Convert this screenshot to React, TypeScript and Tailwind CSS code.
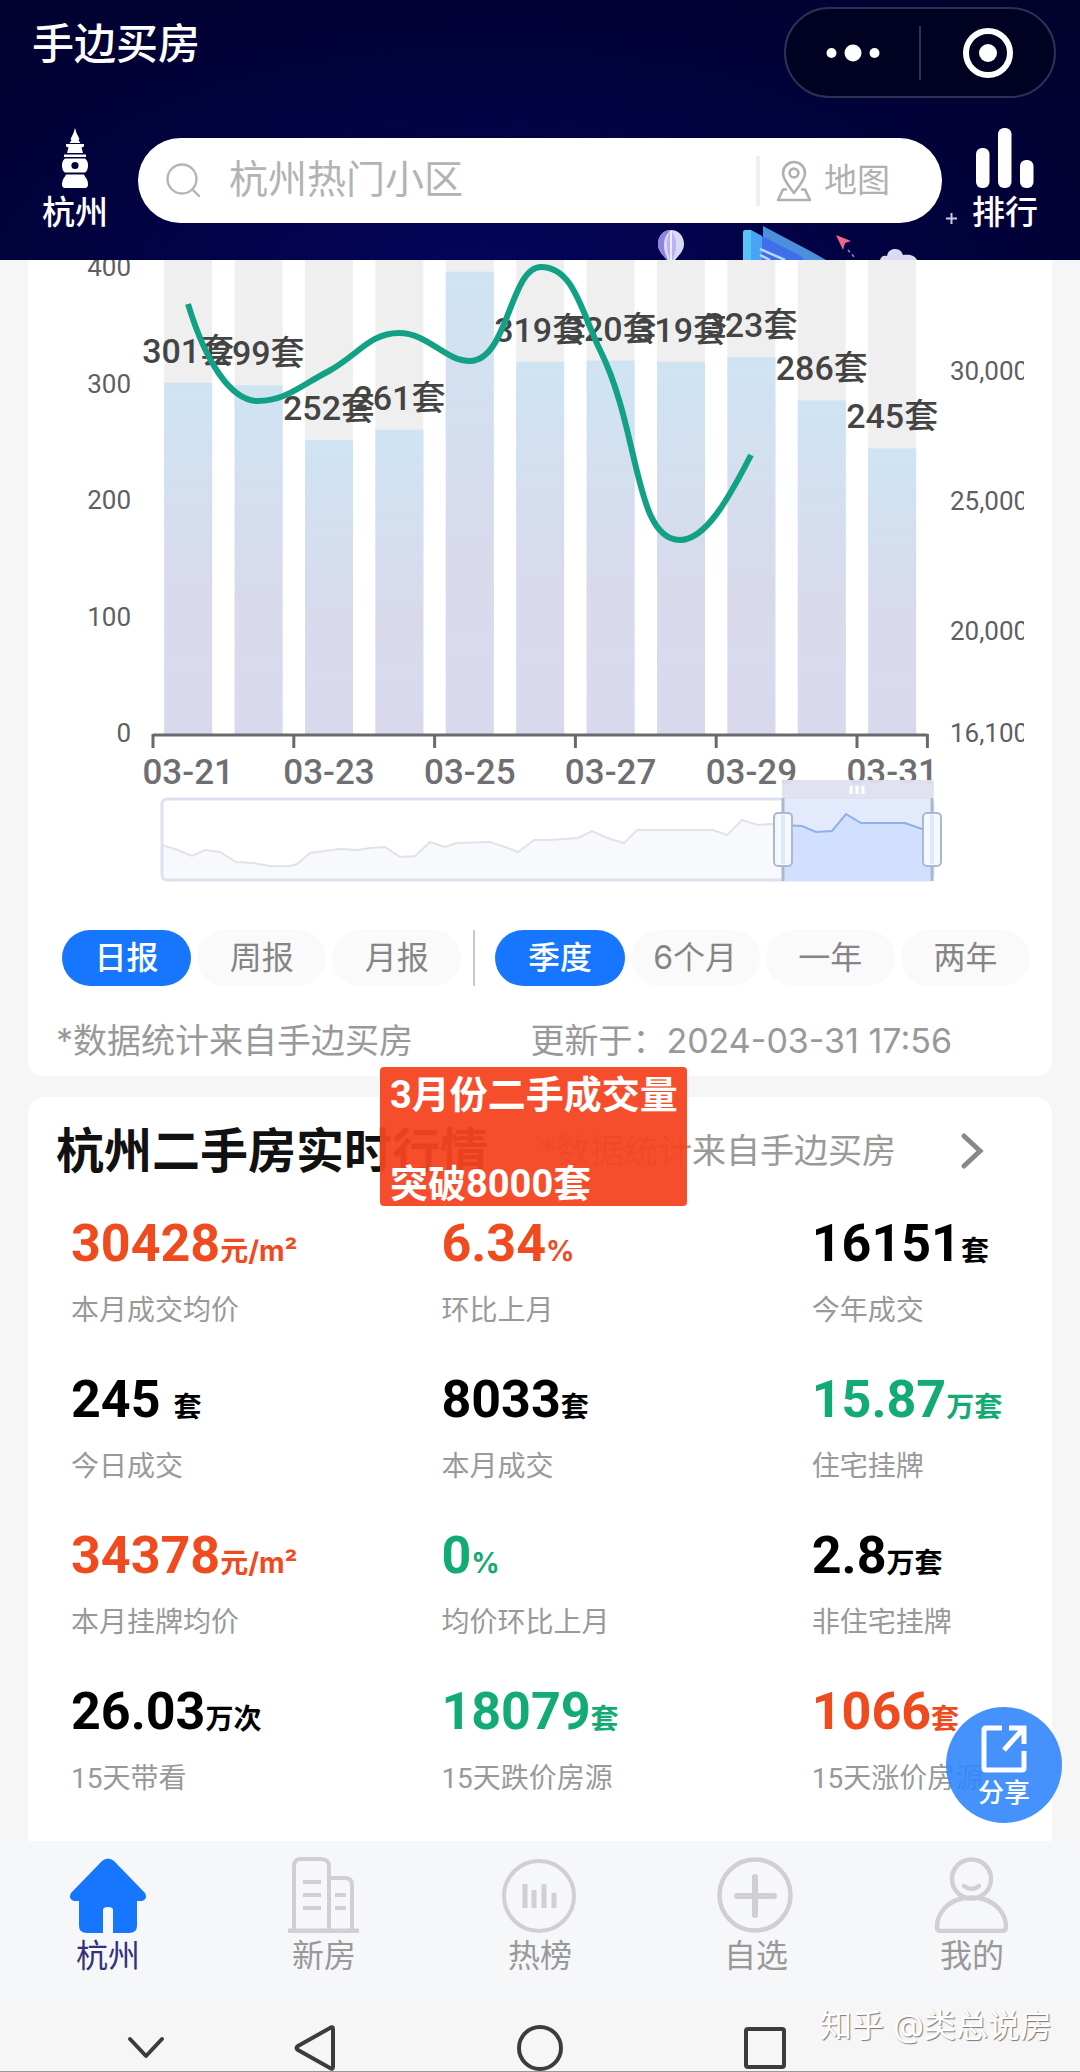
import React, { useState } from 'react';

type Tone = 'red' | 'green' | 'black';

interface Stat {
  value: string;
  unit: string;
  label: string;
  tone: Tone;
}

interface Bar {
  date: string;
  count: number;
  showLabel: boolean;
}

const stats: Stat[] = [
  { value: '30428', unit: '元/m²', label: '本月成交均价', tone: 'red' },
  { value: '6.34', unit: '%', label: '环比上月', tone: 'red' },
  { value: '16151', unit: '套', label: '今年成交', tone: 'black' },
  { value: '245 ', unit: '套', label: '今日成交', tone: 'black' },
  { value: '8033', unit: '套', label: '本月成交', tone: 'black' },
  { value: '15.87', unit: '万套', label: '住宅挂牌', tone: 'green' },
  { value: '34378', unit: '元/m²', label: '本月挂牌均价', tone: 'red' },
  { value: '0', unit: '%', label: '均价环比上月', tone: 'green' },
  { value: '2.8', unit: '万套', label: '非住宅挂牌', tone: 'black' },
  { value: '26.03', unit: '万次', label: '15天带看', tone: 'black' },
  { value: '18079', unit: '套', label: '15天跌价房源', tone: 'green' },
  { value: '1066', unit: '套', label: '15天涨价房源', tone: 'red' },
];

const toneClass: Record<Tone, string> = {
  red: 'text-[#f04a1f]',
  green: 'text-[#12ab74]',
  black: 'text-black',
};

const bars: Bar[] = [
  { date: '03-21', count: 301, showLabel: true },
  { date: '03-22', count: 299, showLabel: true },
  { date: '03-23', count: 252, showLabel: true },
  { date: '03-24', count: 261, showLabel: true },
  { date: '03-25', count: 396, showLabel: false },
  { date: '03-26', count: 319, showLabel: true },
  { date: '03-27', count: 320, showLabel: true },
  { date: '03-28', count: 319, showLabel: true },
  { date: '03-29', count: 323, showLabel: true },
  { date: '03-30', count: 286, showLabel: true },
  { date: '03-31', count: 245, showLabel: true },
];

const leftTicks = [400, 300, 200, 100, 0];

const rightTicks = [
  { label: '30,000', y: 111 },
  { label: '25,000', y: 241 },
  { label: '20,000', y: 371 },
  { label: '16,100', y: 473 },
];

const reportTypes = ['日报', '周报', '月报'];
const ranges = ['季度', '6个月', '一年', '两年'];

// Plot geometry, in viewBox units
const AXIS_X = 125;
const AXIS_Y = 475;
const BAND = 70.4;
const BAR_WIDTH = 48;
const UNIT = 1.17;

const OVERVIEW_LINE =
  'M134 585 L150 590 L164 596 L177 590 L192 592 L208 602 L225 603 L242 606 L262 606 L269 604 L282 593 L297 591 L312 589 L330 590 L342 588 L357 587 L372 597 L387 596 L402 582 L417 587 L429 583 L462 582 L477 587 L490 592 L506 580 L522 580 L550 578 L564 571 L582 579 L596 583 L609 570 L685 570 L699 575 L714 560 L730 565 L742 564 L754 565';
const SELECTED_LINE = 'M754 565 L774 566 L788 572 L804 571 L818 554 L833 563 L877 563 L894 569 L904 571';

const SearchIcon = () => (
  <svg className="w-[35px] h-[35px] shrink-0" viewBox="0 0 35 35" fill="none" stroke="#b5b5b5" strokeWidth="2.4" strokeLinecap="round">
    <circle cx="16" cy="16" r="14.5" />
    <path d="M27 27l6 6" />
  </svg>
);

const MapPinIcon = () => (
  <svg className="w-[36px] h-[42px]" viewBox="0 0 36 42" fill="none" stroke="#b0b0b0" strokeWidth="2.6" strokeLinejoin="round">
    <path d="M18 33C13 26 7 20 7 13a11 11 0 0 1 22 0c0 7-6 13-11 20z" />
    <circle cx="18" cy="13" r="4.4" />
    <path d="M11 29.500H7L2 40h32l-5-10.500h-4" />
  </svg>
);

const PagodaIcon = () => (
  <svg className="w-[26px] h-[60px]" viewBox="0 0 26 60" fill="#fff">
    <path d="M13 0l1.500 5 3 6-1 1 2 3H7.500l2-3-1-1 3-6z" />
    <path d="M4 16h18v2.500l-2.500 1L21 25H5l1.500-5.500-2.500-1z" />
    <path d="M2 26.500h22v2.500H2z" />
    <path d="M3 30.500h20c2.500 2 3 4 3 7s-1 6-3 7H3c-2-1-3-4-3-7s.5-5 3-7z" />
    <path d="M4 46.500h18l1 2c2 2 3 5 3 8 0 2-1 3.500-3 3.500H3c-2 0-3-1.500-3-3.500 0-3 1-6 3-8z" />
    <circle cx="13" cy="37.500" r="3.600" fill="#02023a" />
  </svg>
);

const RankIcon = () => (
  <svg className="w-[58px] h-[60px]" viewBox="0 0 58 60" fill="#fff">
    <rect x="0" y="20" width="13.500" height="40" rx="6" />
    <rect x="22" y="0" width="13.500" height="60" rx="6" />
    <rect x="44" y="32" width="13.500" height="28" rx="6" />
  </svg>
);

const HeaderArt = () => (
  <svg className="absolute bottom-0 right-[160px] w-[300px] h-[50px]" viewBox="0 0 300 50">
    {/* balloon */}
    <path d="M38 34c0-8 5.500-14 13-14s13 6 13 14c0 7-5 11-9 16h-8c-4-5-9-9-9-16z" fill="#d9d8f5" />
    <path d="M38 34c0-8 5.500-14 13-14-5 4-7 9-7 15 0 7 2 10 4 15h-1c-4-5-9-9-9-16z" fill="#8f84dd" />
    <path d="M51 20c-3 4-4 9-4 14 0 7 1 10 3 16h3c2-6 3-9 3-16 0-5-2-10-5-14z" fill="#b9b4ef" />
    <path d="M51 21v29" stroke="#fff" strokeWidth="1.500" />
    {/* book */}
    <path d="M143 16l49 26 14 8h-44l-19-12z" fill="#4c8fdc" />
    <path d="M130 20l51 26 3 4h-54z" fill="#3f6fe8" />
    <path d="M123 22q0-2 2-2h6v30h-8z" fill="#57c4f5" />
    <path d="M131 20l11 6v24h-11z" fill="#4aa2f4" />
    <path d="M140 39l25 11M140 45l10 5" stroke="#b9d6ff" strokeWidth="2.500" />
    {/* paper plane */}
    <path d="M216 25l15 6-6 2-2 7z" fill="#f0668a" />
    <path d="M228 40l7 8" stroke="#8f8fc8" strokeWidth="1.500" strokeDasharray="3 3" />
    {/* cloud */}
    <path d="M260 50c1-4 4-5 7-4 1-5 4-7 8-7 5 0 7 3 8 6 6-1 12 0 14 5z" fill="#dcdaf3" />
  </svg>
);

const TrendChart = () => (
  <svg
    className="block w-full font-['Roboto','Noto_Sans_CJK_SC',sans-serif]"
    viewBox="0 0 1024 640"
    role="img"
    aria-label="成交量走势"
  >
    <defs>
      <linearGradient id="bar" x1="0" y1="0" x2="0" y2="1">
        <stop offset="0" stopColor="#cfe4f3" />
        <stop offset="0.600" stopColor="#d8daec" />
        <stop offset="1" stopColor="#d8d9ed" />
      </linearGradient>
      <clipPath id="rightAxis">
        <rect x="900" y="0" width="96" height="640" />
      </clipPath>
    </defs>

    {bars.map((bar, i) => {
      const x = AXIS_X + BAND * i + (BAND - BAR_WIDTH) / 2;
      const h = bar.count * UNIT;
      return (
        <g key={bar.date}>
          <rect x={x} y="0" width={BAR_WIDTH} height={AXIS_Y} fill="#efefef" />
          <rect x={x} y={AXIS_Y - h} width={BAR_WIDTH} height={h} fill="url(#bar)" />
        </g>
      );
    })}

    {/* axes */}
    <path d={`M${AXIS_X} ${AXIS_Y}H${AXIS_X + BAND * 11}`} stroke="#6a6a6e" strokeWidth="3" />
    {[0, 2, 4, 6, 8, 10, 11].map(i => (
      <path key={i} d={`M${AXIS_X + BAND * i} ${AXIS_Y - 1}v14`} stroke="#6a6a6e" strokeWidth="3" />
    ))}
    {leftTicks.map(tick => (
      <text key={tick} x="103" y={AXIS_Y + 7 - tick * 1.165} textAnchor="end" fontSize="26" fill="#5f5f63">{tick}</text>
    ))}
    <g clipPath="url(#rightAxis)">
      {rightTicks.map(tick => (
        <text key={tick.label} x="922" y={tick.y + 9} fontSize="26" fill="#5f5f63">{tick.label}</text>
      ))}
    </g>
    {bars.filter((_, i) => i % 2 === 0).map((bar, i) => (
      <text key={bar.date} className="font-medium" x={AXIS_X + BAND * (i * 2 + 0.5)} y="524" textAnchor="middle" fontSize="35" fill="#6f6f73">{bar.date}</text>
    ))}

    {bars.map((bar, i) => bar.showLabel && (
      <text
        key={bar.date}
        className="font-medium"
        x={AXIS_X + BAND * (i + 0.5)}
        y={AXIS_Y - bar.count * UNIT - 20}
        textAnchor="middle"
        fontSize="34"
        fill="#444"
      >
        {bar.count}套
      </text>
    ))}

    {/* average price */}
    <path
      d="M160 44C177 100 202 141 230 141C257 141 272 126 301 111C330 95 342 73 371 73C400 73 417 101 442 101C480 101 482 7 513 7C545 7 553 50 572 90C612 170 606 280 652 280C677 280 700 240 723 195"
      fill="none"
      stroke="#12a184"
      strokeWidth="6"
    />

    {/* range overview */}
    <path d={`${OVERVIEW_LINE} V620 H134z`} fill="#f7f9fc" />
    <path d={OVERVIEW_LINE} fill="none" stroke="#e1e3e8" strokeWidth="2" />
    <rect x="134" y="539" width="771" height="81" rx="5" fill="none" stroke="#dce2ef" strokeWidth="3" />
    <rect x="754" y="520" width="152" height="19" rx="3" fill="#dfe0ee" fillOpacity="0.950" />
    <rect x="754" y="539" width="150" height="82" fill="#e2eafc" />
    <path d={`${SELECTED_LINE} V621 H754z`} fill="#d0e0fe" />
    <path d={SELECTED_LINE} fill="none" stroke="#8fb0e8" strokeWidth="2" />
    <path d="M823 526v8M829 526v8M835 526v8" stroke="#fff" strokeWidth="3" />
    <path d="M755 538v83M904 538v83" stroke="#acb8d1" strokeWidth="3" />
    <rect x="746" y="553" width="18" height="53" rx="4" fill="#f4f9ff" stroke="#acb8d1" strokeWidth="2" />
    <rect x="895" y="553" width="18" height="53" rx="4" fill="#f4f9ff" stroke="#acb8d1" strokeWidth="2" />
    <path d="M755 555v49M904 555v49" stroke="#dde9f8" strokeWidth="4" />
  </svg>
);

interface PillProps {
  label: string;
  active: boolean;
  onClick: () => void;
}

const Pill: React.FC<PillProps> = ({ label, active, onClick }) => (
  <button
    type="button"
    onClick={onClick}
    className={`flex-1 h-14 rounded-full text-[32px] leading-[56px] ${active ? 'bg-[#1677fe] text-white font-medium' : 'bg-[#fafafa] text-[#858585]'}`}
  >
    {label}
  </button>
);

const tabs = [
  {
    label: '杭州',
    icon: (
      <path
        d="M33 4q6-5 12 0l31 32q3 6-3 8h-5v25q0 7-8 7H44V53q0-3-5-3t-5 3v23H18q-8 0-8-7V44H5q-6-2-3-8z"
        fill="#1677fe"
      />
    ),
  },
  {
    label: '新房',
    icon: (
      <g fill="none" stroke="#d0d0d3" strokeWidth="4">
        <path d="M9 73V9q0-7 7-7h20q8 0 8 8v63M44 21h16q7 0 7 7v45" />
        <path d="M3 74h71" strokeWidth="5" />
        <path d="M18 25h18M18 38h18M18 51h18M50 38h11M50 51h11" />
      </g>
    ),
  },
  {
    label: '热榜',
    icon: (
      <g fill="none" stroke="#d0d0d3" strokeWidth="4">
        <circle cx="38" cy="39" r="35" />
        <path d="M24 27v24M33 33v18M43 27v24M53 36v15" strokeWidth="5" />
      </g>
    ),
  },
  {
    label: '自选',
    icon: (
      <g fill="none" stroke="#d0d0d3" strokeWidth="4.500">
        <circle cx="38" cy="38" r="35.500" />
        <path d="M38 20v38M20 39h37" strokeWidth="6" strokeLinecap="round" />
      </g>
    ),
  },
  {
    label: '我的',
    icon: (
      <g fill="none" stroke="#d0d0d3" strokeWidth="4.500">
        <circle cx="38.500" cy="22" r="19.500" />
        <path d="M31 29q7.500 6 15 0" strokeLinecap="round" />
        <path d="M27 42c-12 3-23 14-23 28q0 4 4 4h61q4 0 4-4c0-14-11-25-23-28q-11-3-23 0z" />
      </g>
    ),
  },
];

const App: React.FC = () => {
  const [keyword, setKeyword] = useState('');
  const [reportType, setReportType] = useState('日报');
  const [range, setRange] = useState('季度');

  return (
    <div lang="zh-CN" className="relative w-full overflow-hidden bg-[#f6f6f7] font-['Inter','Noto_Sans_CJK_SC',sans-serif]">
      <header className="relative pt-[7px] pb-6 text-white bg-[#02022f] bg-[radial-gradient(ellipse_at_45%_110%,#04045e_0%,#02023f_50%,#02022b_100%)]">
        <div className="flex items-start justify-between pl-8 pr-6">
          <h1 className="text-[42px] leading-[74px] font-medium">手边买房</h1>
          <div className="flex items-center w-[272px] h-[91px] rounded-full border-2 border-[#2f2f55] bg-[#010122]">
            <button type="button" aria-label="更多" className="flex-1 flex justify-center">
              <svg className="w-[54px] h-[18px]" viewBox="0 0 54 18" fill="#fff">
                <circle cx="5.500" cy="9" r="5" />
                <circle cx="27" cy="9" r="8.500" />
                <circle cx="48.500" cy="9" r="5" />
              </svg>
            </button>
            <span className="w-[2px] h-[54px] bg-[#33335a]" />
            <button type="button" aria-label="关闭" className="flex-1 flex justify-center">
              <svg className="w-[50px] h-[50px]" viewBox="0 0 50 50">
                <circle cx="25" cy="25" r="22" fill="none" stroke="#fff" strokeWidth="6" />
                <circle cx="25" cy="25" r="9" fill="#fff" />
              </svg>
            </button>
          </div>
        </div>

        <div className="flex items-start mt-[30px]">
          <button type="button" className="w-[138px] shrink-0 pl-3 flex flex-col items-center text-[33px] leading-[48px] font-medium">
            <PagodaIcon />
            杭州
          </button>
          <div className="relative z-10 flex-1 min-w-0 flex items-center h-[85px] mt-[10px] pl-7 pr-[52px] rounded-full bg-white">
            <SearchIcon />
            <input
              type="text"
              aria-label="搜索小区"
              className="flex-1 min-w-0 ml-7 pb-1 text-[39px] leading-[56px] text-gray-800 placeholder-[#b3b3b3] focus:outline-none"
              placeholder="杭州热门小区"
              value={keyword}
              onChange={e => setKeyword(e.target.value)}
            />
            <span className="w-1 h-[50px] bg-[#f0f0f0]" />
            <button type="button" className="flex items-center gap-3 shrink-0 ml-4 text-[33px] text-[#b0b0b0]">
              <MapPinIcon />
              地图
            </button>
          </div>
          <button type="button" className="w-[138px] shrink-0 pr-3 flex flex-col items-center text-[33px] leading-[48px] font-medium">
            <RankIcon />
            排行
          </button>
        </div>
        <HeaderArt />
        <svg className="absolute bottom-[36px] right-[123px] w-[11px] h-[11px]" viewBox="0 0 11 11" stroke="#c9c9ea" strokeWidth="2">
          <path d="M5.500 0v11M0 5.500h11" />
        </svg>
      </header>

      <main className="flex flex-col gap-[21px] px-7">
        <section className="pb-[11px] rounded-b-2xl bg-white">
          <TrendChart />
          <div className="flex items-center gap-[6px] mt-[30px] pl-[34px] pr-[22px]">
            {reportTypes.map(item => (
              <Pill key={item} label={item} active={reportType === item} onClick={() => setReportType(item)} />
            ))}
            <span className="w-[2px] h-14 ml-[6px] mr-[14px] bg-[#c8c8c8]" />
            {ranges.map(item => (
              <Pill key={item} label={item} active={range === item} onClick={() => setRange(item)} />
            ))}
          </div>
          <div className="flex justify-between mt-[31px] pl-7 pr-[100px] text-[34px] leading-[48px] text-[#999]">
            <p>*数据统计来自手边买房</p>
            <p>更新于：2024-03-31 17:56</p>
          </div>
        </section>

        <section className="relative pt-5 pb-[42px] rounded-t-2xl bg-white">
          <div className="flex items-center justify-between pl-7 pr-[68px]">
            <h2 className="text-[48px] leading-[68px] font-bold text-[#111]">杭州二手房实时行情</h2>
            <a href="#market" className="flex items-center gap-16 text-[34px] leading-[48px] text-[#999]">
              *数据统计来自手边买房
              <svg className="w-6 h-[38px]" viewBox="0 0 24 38" fill="none" stroke="#888" strokeWidth="5" strokeLinecap="round">
                <path d="M4 4l16 15L4 34" />
              </svg>
            </a>
          </div>
          <div className="absolute -top-[30px] left-[352px] flex flex-col gap-[45px] w-[307px] pt-[6px] rounded bg-[#f64522]/95 pl-[10px] font-['Roboto','Noto_Sans_CJK_SC',sans-serif] text-[38px] leading-[44px] font-bold text-white whitespace-nowrap">
            <p>3月份二手成交量</p>
            <p>突破8000套</p>
          </div>
          <dl className="grid grid-cols-[37fr_37fr_24fr] gap-y-[41px] mt-[31px] pl-[43px] font-['Roboto','Noto_Sans_CJK_SC',sans-serif]">
            {stats.map(stat => (
              <div key={stat.label} className="flex flex-col-reverse gap-[19px] whitespace-nowrap">
                <dt className="text-[28px] leading-[40px] text-[#999]">{stat.label}</dt>
                <dd className={`h-14 text-[52px] leading-[56px] font-bold whitespace-pre ${toneClass[stat.tone]}`}>
                  {stat.value}
                  <span className="font-['Inter','Noto_Sans_CJK_SC',sans-serif] text-[28px]">{stat.unit}</span>
                </dd>
              </div>
            ))}
          </dl>
          <button
            type="button"
            className="absolute bottom-[18px] -right-[10px] flex flex-col items-center w-[116px] h-[116px] pt-[18px] rounded-full bg-[#3186fd]/90 text-[26px] leading-[40px] font-medium text-white"
          >
            <svg className="w-[46px] h-[48px]" viewBox="0 0 46 48" fill="none" stroke="#fff" strokeWidth="5">
              <path d="M21 3H5q-2 0-2 2v38q0 2 2 2h36q2 0 2-2V26" />
              <path d="M28 3h15v16M42 4L23 25" />
            </svg>
            分享
          </button>
        </section>
      </main>

      <nav className="grid grid-cols-5 pt-4 pb-7 bg-[#f6f7f9]">
        {tabs.map((tab, i) => (
          <a
            key={tab.label}
            href={`#tab-${i}`}
            className={`flex flex-col items-center gap-[3px] text-[32px] leading-[40px] ${i === 0 ? 'text-[#33317a]' : 'text-[#999]'}`}
          >
            <svg className="w-[78px] h-[76px]" viewBox="0 0 78 76">{tab.icon}</svg>
            {tab.label}
          </a>
        ))}
      </nav>

      <footer className="relative grid grid-cols-[1fr_2fr_2fr_2fr] items-center justify-items-center h-[68px] pt-5 pl-[90px] pr-[203px] border-b border-[#999]">
        <button type="button" aria-label="收起">
          <svg className="block w-[38px] h-[24px]" viewBox="0 0 38 24" fill="none" stroke="#3c3c3c" strokeWidth="4" strokeLinecap="round" strokeLinejoin="round">
            <path d="M3 3l16 17L35 3" />
          </svg>
        </button>
        <button type="button" aria-label="返回">
          <svg className="block w-[42px] h-[46px]" viewBox="0 0 42 46" fill="none" stroke="#3c3c3c" strokeWidth="4" strokeLinejoin="round">
            <path d="M36 3q3-2 3 1v38q0 3-3 1L4 25q-3-2 0-4z" />
          </svg>
        </button>
        <button type="button" aria-label="主页">
          <svg className="block w-[46px] h-[46px]" viewBox="0 0 46 46" fill="none" stroke="#3c3c3c" strokeWidth="4">
            <circle cx="23" cy="23" r="21" />
          </svg>
        </button>
        <button type="button" aria-label="最近任务">
          <svg className="block w-[44px] h-[44px]" viewBox="0 0 44 44" fill="none" stroke="#3c3c3c" strokeWidth="4">
            <rect x="3" y="3" width="38" height="38" rx="2" />
          </svg>
        </button>
        <p className="absolute top-[2px] right-7 text-[32px] leading-[40px] text-white [text-shadow:1px_1px_1px_#777]">知乎 @类总说房</p>
      </footer>
    </div>
  );
};

export default App;
